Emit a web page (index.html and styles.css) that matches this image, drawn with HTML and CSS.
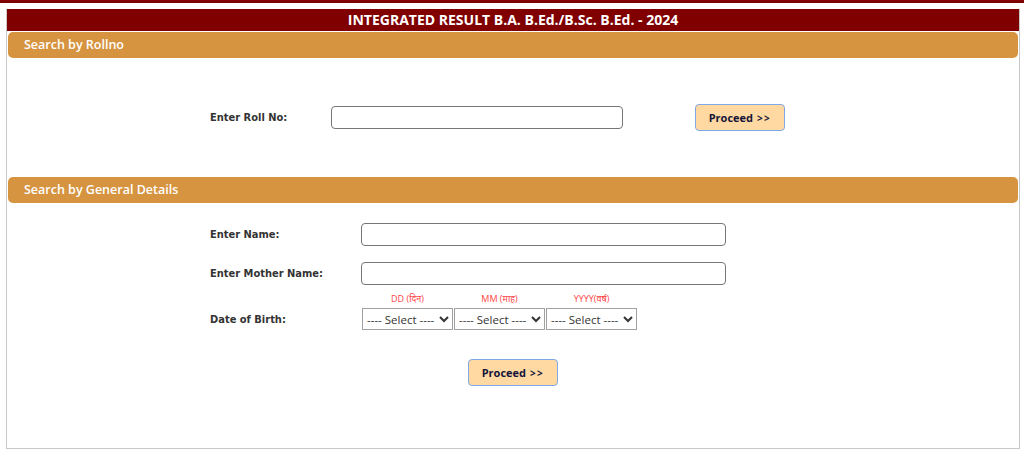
FILE: index.html
```html
<!DOCTYPE html>
<html lang="en">
  <head>
    <meta charset="UTF-8" />
    <meta name="viewport" content="width=device-width, initial-scale=1.0" />
    <title>Integrated Result B.A. B.Ed./B.Sc. B.Ed. - 2024</title>
    <link rel="stylesheet" href="styles.css">
  </head>
  <body>
    <div class="top-strip"></div>
    <div class="wrapper">
      <div class="page-title">INTEGRATED RESULT B.A. B.Ed./B.Sc. B.Ed. - 2024</div>

      <div class="panel-head">Search by Rollno</div>
      <div class="roll-row">
        <label class="field-label" for="rollNo">Enter Roll No:</label>
        <input type="text" id="rollNo" class="txt roll-input" />
        <button class="proceed-btn">Proceed <span class="arrows">&gt;&gt;</span></button>
      </div>

      <div class="panel-head">Search by General Details</div>
      <div class="general">
        <div class="form-row">
          <label class="field-label" for="candName">Enter Name:</label>
          <input type="text" id="candName" class="txt wide-input" />
        </div>
        <div class="form-row">
          <label class="field-label" for="motherName">Enter Mother Name:</label>
          <input type="text" id="motherName" class="txt wide-input" />
        </div>
        <div class="form-row captions">
          <span></span>
          <div class="dob-group">
            <span class="dob-caption">DD (दिन)</span>
            <span class="dob-caption">MM (माह)</span>
            <span class="dob-caption">YYYY(वर्ष)</span>
          </div>
        </div>
        <div class="form-row dob-row">
          <label class="field-label">Date of Birth:</label>
          <div class="dob-group">
            <select class="dob-select"><option>---- Select ----</option></select>
            <select class="dob-select"><option>---- Select ----</option></select>
            <select class="dob-select"><option>---- Select ----</option></select>
          </div>
        </div>
        <div class="submit-row">
          <button class="proceed-btn">Proceed <span class="arrows">&gt;&gt;</span></button>
        </div>
      </div>
    </div>
  </body>
</html>
```

FILE: styles.css
```css
body {
  margin: 0;
  font-family: "Open Sans", "Noto Sans", sans-serif;
  background: #fff;
  color: #333;
}
.top-strip {
  height: 3px;
  background-color: #800000;
  margin-bottom: 6px;
}
.wrapper {
  margin: 0 4px 0 6px;
  border: 1px solid #c8c8c8;
  border-top: none;
}
.page-title {
  background-color: #800000;
  color: #fff;
  font-weight: bold;
  font-size: 14px;
  text-align: center;
  height: 22px;
  line-height: 22px;
  margin-bottom: 1px;
}
.panel-head {
  background-color: #d69440;
  color: #fff;
  font-weight: 600;
  font-size: 12.5px;
  height: 26px;
  line-height: 26px;
  padding-left: 16px;
  margin: 0 1px;
  border-radius: 5px;
}

/* roll number search */
.roll-row {
  display: flex;
  align-items: center;
  padding: 46px 0 46px 203px;
}
.field-label {
  font-family: "DejaVu Sans Condensed", "DejaVu Sans", sans-serif;
  font-size: 11px;
  font-weight: bold;
  color: #333;
}
.roll-row .field-label {
  width: 121px;
}
.txt {
  box-sizing: border-box;
  height: 23px;
  border: 1px solid #767676;
  border-radius: 4px;
  padding: 2px 6px;
  font-size: 12px;
  background: #fff;
}
.roll-input {
  width: 292px;
  margin-right: 72px;
}
.proceed-btn {
  box-sizing: border-box;
  width: 90px;
  height: 27px;
  background-color: #ffd9a1;
  border: 1px solid #7fa8e6;
  border-radius: 4px;
  color: #15153a;
  font-family: "Open Sans", sans-serif;
  font-size: 11px;
  font-weight: bold;
  cursor: pointer;
  padding: 0;
}
.proceed-btn .arrows {
  font-size: 10px;
  letter-spacing: 1.5px;
  margin-left: 1px;
}

/* general details search */
.general {
  padding: 20px 0 62px 203px;
}
.form-row {
  display: grid;
  grid-template-columns: 151px auto;
  align-items: center;
  margin-bottom: 16px;
}
.wide-input {
  width: 365px;
}
.form-row.captions {
  margin-top: -8px;
  margin-bottom: 3px;
}
.dob-group {
  display: flex;
  gap: 1px;
  padding-left: 1px;
}
.dob-caption {
  width: 91px;
  text-align: center;
  font-size: 9px;
  color: #ff4444;
  line-height: 12px;
}
.dob-select {
  width: 91px;
  height: 22px;
  font-family: "Open Sans", sans-serif;
  font-size: 11.5px;
  color: #333;
  border: 1px solid #a0a0a0;
  background: #fff;
}
.dob-row {
  margin-bottom: 29px;
}
.submit-row {
  display: flex;
  justify-content: center;
  margin-left: -203px;
}
```
